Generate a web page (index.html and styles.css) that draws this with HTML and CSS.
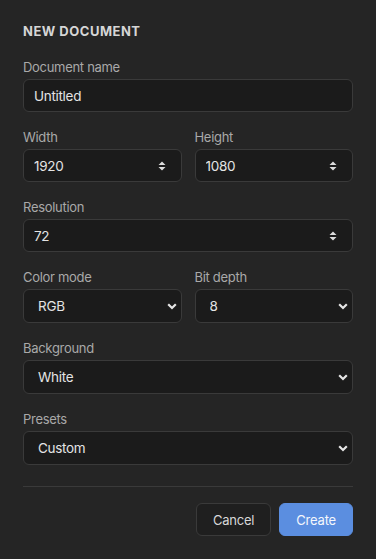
FILE: index.html
```html
<!DOCTYPE html>
<html lang="en">
<head>
  <meta charset="UTF-8" />
  <meta name="viewport" content="width=device-width, initial-scale=1.0"/>
  <title>New Document</title>
  <link rel="stylesheet" href="styles.css">
</head>
<body>
  <div class="dialog">
    <h2>NEW DOCUMENT</h2>

    <div class="field">
      <label for="docName">Document name</label>
      <input type="text" id="docName" class="text-input" value="Untitled" autofocus />
    </div>

    <div class="row">
      <div class="field">
        <label for="docWidth">Width</label>
        <input type="number" id="docWidth" class="text-input number" value="1920" />
      </div>
      <div class="field">
        <label for="docHeight">Height</label>
        <input type="number" id="docHeight" class="text-input number" value="1080" />
      </div>
    </div>

    <div class="field">
      <label for="docRes">Resolution</label>
      <input type="number" id="docRes" class="text-input number" value="72" />
    </div>

    <div class="row">
      <div class="field">
        <label for="colorMode">Color mode</label>
        <select id="colorMode">
          <option>RGB</option>
          <option>CMYK</option>
          <option>Grayscale</option>
        </select>
      </div>
      <div class="field">
        <label for="bitDepth">Bit depth</label>
        <select id="bitDepth">
          <option>8</option>
          <option>16</option>
          <option>32</option>
        </select>
      </div>
    </div>

    <div class="field">
      <label for="background">Background</label>
      <select id="background">
        <option>White</option>
        <option>Black</option>
        <option>Transparent</option>
      </select>
    </div>

    <div class="field">
      <label for="presets">Presets</label>
      <select id="presets">
        <option>Custom</option>
        <option>HD 1080p</option>
        <option>A4</option>
      </select>
    </div>

    <div class="actions">
      <button class="btn">Cancel</button>
      <button class="btn primary">Create</button>
    </div>
  </div>
</body>
</html>
```

FILE: styles.css
```css
body {
  margin: 0;
  background-color: #252525;
  font-family: Inter, "Noto Sans", sans-serif;
  color: #e2e2e2;
}

.dialog {
  padding: 22px 23px 20px 23px;
}

.dialog h2 {
  margin: 0 0 19px 0;
  font-size: 13px;
  line-height: 18px;
  font-weight: 700;
  letter-spacing: 0.5px;
  color: #d6d6d6;
}

.field {
  display: flex;
  flex-direction: column;
  gap: 4px;
  margin-bottom: 17px;
}

.row {
  display: grid;
  grid-template-columns: 1fr 1fr;
  gap: 13px;
}

label {
  font-size: 13px;
  line-height: 16px;
  color: #a9a9a9;
  letter-spacing: -0.3px;
}

.text-input, select {
  box-sizing: border-box;
  width: 100%;
  height: 33px;
  background-color: #1b1b1b;
  border: 1px solid #3a3a3a;
  border-radius: 6px;
  color: #e4e4e4;
  caret-color: #e4e4e4;
  font-family: inherit;
  font-size: 13.5px;
  letter-spacing: -0.3px;
  padding: 0 10px;
  outline: none;
}

.number {
  -moz-appearance: textfield;
  background-image: url("data:image/svg+xml,%3Csvg xmlns='http://www.w3.org/2000/svg' width='8' height='10' viewBox='0 0 8 10'%3E%3Cpath d='M4 0.5L7.5 4H0.5Z M4 9.5L7.5 6H0.5Z' fill='%23dcdcdc'/%3E%3C/svg%3E");
  background-repeat: no-repeat;
  background-position: right 15px center;
}

.number::-webkit-inner-spin-button,
.number::-webkit-outer-spin-button {
  -webkit-appearance: none;
  margin: 0;
}

select {
  -webkit-appearance: none;
  appearance: none;
  height: 34px;
  padding-left: 14px;
  background-image: url("data:image/svg+xml,%3Csvg xmlns='http://www.w3.org/2000/svg' width='10' height='7' viewBox='0 0 10 7'%3E%3Cpath d='M1.2 1.2L5 5L8.8 1.2' stroke='%23e6e6e6' stroke-width='2.2' fill='none'/%3E%3C/svg%3E");
  background-repeat: no-repeat;
  background-position: right 4px center;
}

.actions {
  display: flex;
  justify-content: flex-end;
  gap: 8px;
  border-top: 1px solid #3a3a3a;
  margin-top: 21px;
  padding-top: 16px;
}

.btn {
  height: 33px;
  padding: 0 16px;
  border-radius: 6px;
  border: 1px solid #3a3a3a;
  background-color: #1f1f1f;
  color: #d8d8d8;
  font-family: inherit;
  font-size: 13px;
  letter-spacing: -0.2px;
}

.btn.primary {
  background-color: #5b8ee0;
  border-color: #5b8ee0;
  color: #f4f7fc;
}
```
